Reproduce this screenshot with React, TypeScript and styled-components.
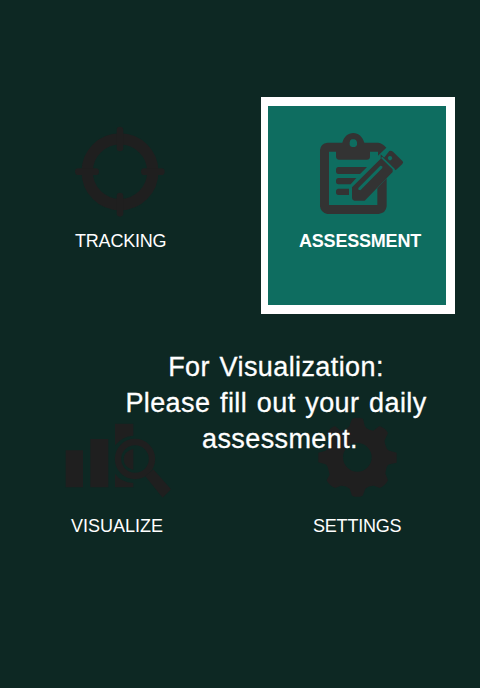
import React from "react";
import styled, { createGlobalStyle } from "styled-components";

const GlobalStyle = createGlobalStyle`
  * { box-sizing: border-box; }
  body { margin: 0; background: #0d2823; }
`;

const Screen = styled.main`
  position: relative;
  width: 480px;
  height: 688px;
  padding: 97px 25px 0 23px;
  overflow: hidden;
  background: #0d2823;
  font-family: "Liberation Sans", Arial, sans-serif;
  color: #fff;
`;

const Menu = styled.nav`
  display: grid;
  grid-template-columns: 194px 194px;
  grid-template-rows: 217px 217px;
  gap: 68px 44px;
`;

const Tile = styled.div<{ $active?: boolean }>`
  display: flex;
  flex-direction: column;
  align-items: flex-start;
  border-style: solid;
  border-color: ${(p) => (p.$active ? "#fff" : "transparent")};
  border-width: 9px 9px 9px 7px;
  background: ${(p) => (p.$active ? "#0e6d60" : "transparent")};
  background-clip: padding-box;
  color: ${(p) => (p.$active ? "#333333" : "#1f1f1f")};
`;

const IconSlot = styled.div<{ $indent: number }>`
  display: flex;
  align-items: flex-end;
  height: 114px;
  margin-left: ${(p) => p.$indent}px;
  svg { display: block; flex: none; }
`;

const Label = styled.span<{ $indent: number; $bold?: boolean; $spacing?: number }>`
  margin: 11px 0 0 ${(p) => p.$indent}px;
  font-size: 18px;
  line-height: 20px;
  font-weight: ${(p) => (p.$bold ? 700 : 400)};
  letter-spacing: ${(p) => p.$spacing ?? 0}px;
  white-space: nowrap;
  color: #fff;
`;

const Message = styled.div`
  position: absolute;
  top: 349px;
  left: 76px;
  width: 400px;
  text-align: center;
  font-size: 27px;
  line-height: 36px;
  letter-spacing: 0.4px;
  word-spacing: 1.8px;
  white-space: nowrap;
  -webkit-text-stroke: 0.3px #fff;
`;

const LastLine = styled.span`
  padding-left: 8px;
`;

const CrosshairIcon = () => (
  <svg width="110" height="100" viewBox="0 0 330 300">
    <circle cx="165" cy="155" r="98.500" fill="none" stroke="currentColor" strokeWidth="34" />
    <path
      d="M165 30V84M165 228V280M40 155H92M238 155H289"
      stroke="currentColor"
      strokeWidth="20"
      strokeLinecap="round"
    />
  </svg>
);

const ClipboardIcon = () => (
  <svg width="100" height="95" viewBox="0 0 300 285">
    <path
      fill="currentColor"
      fillRule="evenodd"
      d="M52 53H97C102 35 114 24 130 24S157 35 163 53H205Q217 54 229 68L204 92V80H180V96Q179 104 171 104H86Q79 104 78 96V80H57V240H202V190L230 160V244Q228 264 206 267H52Q32 263 30 244V75Q32 55 52 53ZM125 43Q119 46 119 52V60Q121 66 127 66H134Q140 65 141 59V51Q139 43 133 43Z"
    />
    <path fill="currentColor" d="M84 126H171L150 147H84Q78 146 78 140V132Q79 127 84 126ZM84 159H139L122 178H84Q78 177 78 172V165Q79 160 84 159ZM84 191H117V210H84Q78 209 78 204V197Q79 192 84 191Z" />
    <path fill="currentColor" fillRule="evenodd" d="M212 88L248 123V141L164 227H133Q126 226 126 219V187L212 101ZM211 122L145 189V194L151 196L217 129V124Z" />
    <path fill="currentColor" fillRule="evenodd" d="M238 78Q243 75 249 80L278 109Q281 112 277 117L257 136L221 100ZM237 93L233 99L237 106H243L247 100L244 94Z" />
    <path d="M215 97L252 133" stroke="#0e6d60" strokeWidth="5" />
  </svg>
);

const ChartSearchIcon = () => (
  <svg width="125" height="90" viewBox="0 0 375 270">
    <path
      fill="currentColor"
      d="M32 106H84V217H32ZM106 72H160V217H106ZM180 26H235V62Q202 64 180 91ZM180 176Q198 202 235 204V217H180ZM235 101V165Q206 157 206 133T235 101Z"
    />
    <circle cx="240" cy="132" r="51" fill="none" stroke="currentColor" strokeWidth="19" />
    <path fill="currentColor" d="M271 184L295 163L348 223L323 248Z" />
  </svg>
);

const GearIcon = () => (
  <svg width="120" height="95" viewBox="0 0 360 285">
    <path
      fill="currentColor"
      fillRule="evenodd"
      d="M171 26Q187 20 204 26L209 47Q213 56 223 59L235 62L253 48Q271 54 279 69L269 91Q268 100 276 117Q281 123 289 124L305 128V158L284 163Q276 165 274 176L271 190L279 211Q270 228 254 234L237 227Q222 226 211 236L203 257Q187 264 171 257L164 236Q152 226 137 227L121 234Q103 228 95 211L104 194L99 175Q97 164 89 162L70 157V128L89 123Q97 121 99 110L105 91L95 71Q103 54 120 48L137 62Q150 62 163 49ZM187 99A43 43 0 1 0 187 185A43 43 0 1 0 187 99Z"
    />
  </svg>
);

export default function App() {
  return (
    <>
      <GlobalStyle />
      <Screen>
        <Menu>
          <Tile>
            <IconSlot $indent={35}><CrosshairIcon /></IconSlot>
            <Label $indent={45} $spacing={-0.2}>TRACKING</Label>
          </Tile>
          <Tile $active>
            <IconSlot $indent={42}><ClipboardIcon /></IconSlot>
            <Label $indent={31} $bold $spacing={-0.2}>ASSESSMENT</Label>
          </Tile>
          <Tile>
            <IconSlot $indent={25}><ChartSearchIcon /></IconSlot>
            <Label $indent={41}>VISUALIZE</Label>
          </Tile>
          <Tile>
            <IconSlot $indent={27}><GearIcon /></IconSlot>
            <Label $indent={45} $spacing={-0.2}>SETTINGS</Label>
          </Tile>
        </Menu>
        <Message>
          For Visualization:
          <br />
          Please fill out your daily
          <br />
          <LastLine>assessment.</LastLine>
        </Message>
      </Screen>
    </>
  );
}
